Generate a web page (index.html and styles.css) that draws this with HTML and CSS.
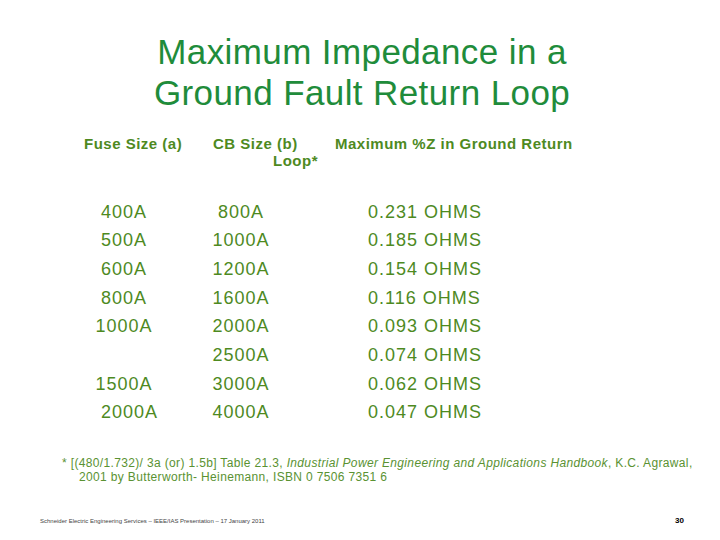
FILE: index.html
```html
<!DOCTYPE html>
<html>
<head>
<meta charset="utf-8">
<link rel="stylesheet" href="styles.css">
</head>
<body>
<div class="slide">
  <h1 class="title">Maximum Impedance in a<br>Ground Fault Return Loop</h1>
  <div class="head">
    <div class="head-row">
      <span class="h1c">Fuse Size (a)</span>
      <span class="h2c">CB Size (b)</span>
      <span class="h3c">Maximum %Z in Ground Return</span>
    </div>
    <div class="head-row2">Loop*</div>
  </div>
  <div class="table">
    <div class="c1">400A</div><div class="c2">800A</div><div class="c3">0.231 OHMS</div>
    <div class="c1">500A</div><div class="c2">1000A</div><div class="c3">0.185 OHMS</div>
    <div class="c1">600A</div><div class="c2">1200A</div><div class="c3">0.154 OHMS</div>
    <div class="c1">800A</div><div class="c2">1600A</div><div class="c3">0.116 OHMS</div>
    <div class="c1">1000A</div><div class="c2">2000A</div><div class="c3">0.093 OHMS</div>
    <div class="c1"></div><div class="c2">2500A</div><div class="c3">0.074 OHMS</div>
    <div class="c1">1500A</div><div class="c2">3000A</div><div class="c3">0.062 OHMS</div>
    <div class="c1 shift">2000A</div><div class="c2">4000A</div><div class="c3">0.047 OHMS</div>
  </div>
  <p class="note">* [(480/1.732)/ 3a (or) 1.5b] Table 21.3, <em>Industrial Power Engineering and Applications Handbook</em>, K.C. Agrawal,<br>2001 by Butterworth- Heinemann, ISBN 0 7506 7351 6</p>
  <div class="footer">
    <span class="foot-text">Schneider Electric Engineering Services – IEEE/IAS Presentation – 17 January 2011</span>
    <span class="page">30</span>
  </div>
</div>
</body>
</html>
```

FILE: styles.css
```css
* { box-sizing: border-box; }
body {
  margin: 0;
  background: #fff;
  font-family: "Liberation Sans", Arial, sans-serif;
}
.slide {
  width: 720px;
  height: 540px;
  display: flex;
  flex-direction: column;
  padding-top: 31px;
}
.title {
  margin: 0;
  font-weight: normal;
  font-size: 35px;
  line-height: 41px;
  letter-spacing: 0.4px;
  text-align: center;
  color: #1f8c3b;
  padding-left: 4px;
}
.head {
  margin-top: 21.5px;
  color: #4e8a1f;
  font-size: 15px;
  font-weight: bold;
  line-height: 17px;
  letter-spacing: 0.5px;
}
.head-row {
  display: flex;
  padding-left: 84px;
}
.h1c { width: 129px; }
.h2c { width: 122px; }
.head-row2 { padding-left: 273px; }
.table {
  margin-top: 29px;
  display: grid;
  grid-template-columns: 120px 114px 1fr;
  grid-auto-rows: 28.7px;
  padding-left: 64px;
  color: #4e8a1f;
  font-size: 18px;
  line-height: 28.7px;
  letter-spacing: 1px;
}
.c1, .c2 { text-align: center; }
.c3 { padding-left: 70px; }
.shift { padding-left: 11px; }
.note {
  margin: 28.7px 0 0;
  padding-left: 79px;
  text-indent: -17px;
  font-size: 12px;
  line-height: 14px;
  letter-spacing: 0.35px;
  color: #5a9232;
}
.footer {
  margin-top: auto;
  height: 24px;
  display: flex;
  justify-content: space-between;
  align-items: flex-start;
  padding: 0 36px 0 40px;
}
.foot-text {
  font-size: 6px;
  line-height: 10px;
  color: #444;
}
.page {
  font-size: 8px;
  line-height: 10px;
  font-weight: bold;
  color: #000;
}
```
